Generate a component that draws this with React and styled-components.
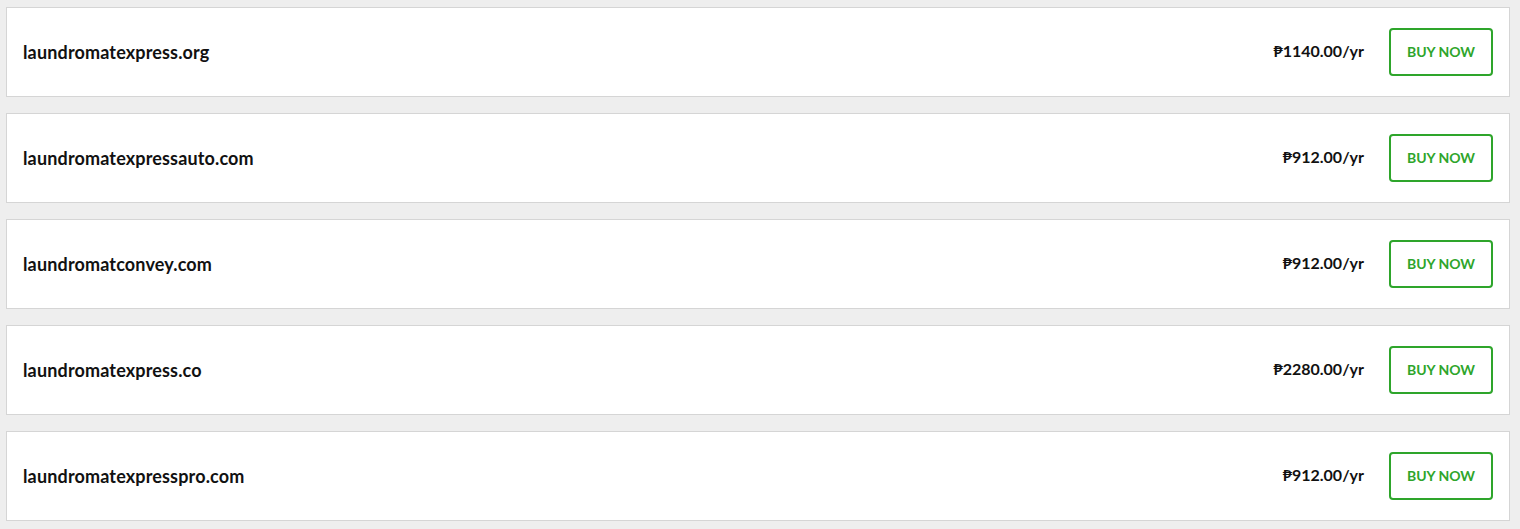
import React from "react";
import styled, { createGlobalStyle } from "styled-components";

const GlobalStyle = createGlobalStyle`
  html, body {
    margin: 0;
    padding: 0;
    background: #eeeeee;
    font-family: Lato, "Open Sans", sans-serif;
  }
`;

const List = styled.div`
  display: flex;
  flex-direction: column;
  gap: 16px;
  padding: 7px 10px 8px 6px;
`;

const Card = styled.div`
  display: flex;
  align-items: center;
  justify-content: space-between;
  height: 90px;
  box-sizing: border-box;
  background: #ffffff;
  border: 1px solid #d5d5d5;
  padding: 0 16px 0 16px;
`;

const Domain = styled.span`
  font-size: 18px;
  font-weight: 700;
  letter-spacing: 0.15px;
  color: #111111;
`;

const Right = styled.div`
  display: flex;
  align-items: center;
  gap: 25px;
`;

const Price = styled.span`
  font-size: 16px;
  font-weight: 700;
  color: #111111;
  margin-top: -4px;
`;

const BuyButton = styled.button`
  width: 104px;
  height: 48px;
  box-sizing: border-box;
  padding: 0 0 2px;
  background: #ffffff;
  border: 2px solid #2ea52b;
  border-radius: 4px;
  color: #2ea52b;
  font-family: Lato, "Open Sans", sans-serif;
  font-size: 14px;
  font-weight: 700;
  text-transform: uppercase;
  cursor: pointer;
`;

const domains = [
  { name: "laundromatexpress.org", price: "₱1140.00/yr" },
  { name: "laundromatexpressauto.com", price: "₱912.00/yr" },
  { name: "laundromatconvey.com", price: "₱912.00/yr" },
  { name: "laundromatexpress.co", price: "₱2280.00/yr" },
  { name: "laundromatexpresspro.com", price: "₱912.00/yr" },
];

const App = () => {
  return (
    <>
      <GlobalStyle />
      <List>
        {domains.map((d) => (
          <Card key={d.name}>
            <Domain>{d.name}</Domain>
            <Right>
              <Price>{d.price}</Price>
              <BuyButton>Buy now</BuyButton>
            </Right>
          </Card>
        ))}
      </List>
    </>
  );
};

export default App;
